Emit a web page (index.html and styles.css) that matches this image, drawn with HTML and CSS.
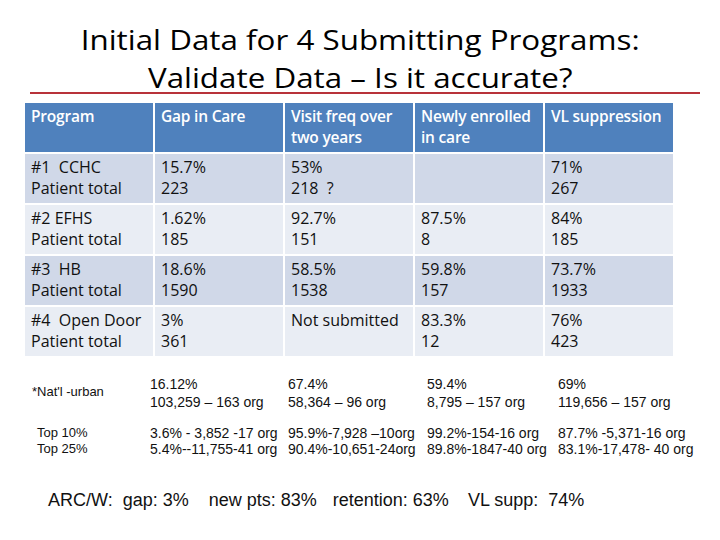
FILE: index.html
```html
<!DOCTYPE html>
<html>
<head>
<meta charset="utf-8">
<link rel="stylesheet" href="styles.css">
</head>
<body>
<div class="slide">
  <h1 class="title"><span class="tl">Initial Data for 4 Submitting Programs:</span><span class="tl">Validate Data – Is it accurate?</span></h1>
  <div class="rule"></div>
  <div class="grid">
    <div class="c h">Program</div>
    <div class="c h">Gap in Care</div>
    <div class="c h">Visit freq over two years</div>
    <div class="c h">Newly enrolled in care</div>
    <div class="c h">VL suppression</div>

    <div class="c o">#1&nbsp; CCHC<br>Patient total</div>
    <div class="c o">15.7%<br>223</div>
    <div class="c o">53%<br>218&nbsp; ?</div>
    <div class="c o"></div>
    <div class="c o">71%<br>267</div>

    <div class="c e">#2 EFHS<br>Patient total</div>
    <div class="c e">1.62%<br>185</div>
    <div class="c e">92.7%<br>151</div>
    <div class="c e">87.5%<br>8</div>
    <div class="c e">84%<br>185</div>

    <div class="c o">#3&nbsp; HB<br>Patient total</div>
    <div class="c o">18.6%<br>1590</div>
    <div class="c o">58.5%<br>1538</div>
    <div class="c o">59.8%<br>157</div>
    <div class="c o">73.7%<br>1933</div>

    <div class="c e">#4&nbsp; Open Door<br>Patient total</div>
    <div class="c e">3%<br>361</div>
    <div class="c e">Not submitted</div>
    <div class="c e">83.3%<br>12</div>
    <div class="c e">76%<br>423</div>
  </div>
  <div class="bench">
    <div class="b1">*Nat'l -urban</div>
    <div>16.12%<br>103,259 – 163 org</div>
    <div>67.4%<br>58,364 – 96 org</div>
    <div>59.4%<br>8,795 – 157 org</div>
    <div>69%<br>119,656 – 157 org</div>
  </div>
  <div class="bench top">
    <div class="b1 b1t">Top 10%<br>Top 25%</div>
    <div>3.6% - 3,852 -17 org<br>5.4%--11,755-41 org</div>
    <div>95.9%-7,928 –10org<br>90.4%-10,651-24org</div>
    <div>99.2%-154-16 org<br>89.8%-1847-40 org</div>
    <div>87.7% -5,371-16 org<br>83.1%-17,478- 40 org</div>
  </div>
  <div class="arc">
    <span class="a1">ARC/W:&nbsp; gap: 3%</span>
    <span class="a2">new pts: 83%</span>
    <span class="a3">retention: 63%</span>
    <span class="a4">VL supp:&nbsp; 74%</span>
  </div>
</div>
</body>
</html>
```
FILE: styles.css
```css
html, body {
  margin: 0;
  padding: 0;
  background: #ffffff;
}
.slide {
  width: 720px;
  height: 540px;
  overflow: hidden;
  font-family: "Open Sans", "Liberation Sans", sans-serif;
}
.title {
  margin: 0;
  padding-top: 21px;
  height: 71px;
  display: flex;
  flex-direction: column;
  align-items: center;
  font-family: "Open Sans", sans-serif;
  font-weight: 400;
  font-size: 27.5px;
  line-height: 38px;
  color: #000;
}
.tl {
  display: block;
  white-space: nowrap;
  transform: scaleX(1.14);
}
.rule {
  margin: 0 20px 0 30px;
  height: 2px;
  background: #b8323a;
}
.grid {
  margin: 9px 0 0 25px;
  width: 648px;
  display: grid;
  grid-template-columns: 128px 128px 128px 128px 128px;
  grid-template-rows: 49px 49px 49px 49px 49px;
  gap: 2px;
  background: #ffffff;
}
.c {
  padding: 3px 0 0 6px;
  font-size: 16px;
  line-height: 21px;
  color: #111;
}
.h {
  background: #4f81bd;
  color: #fff;
  font-weight: 600;
  font-size: 15.5px;
  letter-spacing: -0.2px;
}
.o { background: #d0d8e8; }
.e { background: #e9edf4; }
.bench {
  display: grid;
  grid-template-columns: 150px 138px 139px 131px 160px;
  font-family: "Liberation Sans", Arial, sans-serif;
  font-size: 14px;
  line-height: 18px;
  color: #111;
  margin-top: 19px;
  white-space: nowrap;
}
.bench.top { margin-top: 14px; line-height: 16px; }
.b1 { padding-left: 32px; padding-top: 8px; font-size: 13px; }
.b1t { padding-left: 37px; padding-top: 0; }
.arc {
  margin-top: 33px;
  padding-left: 48px;
  font-family: "Liberation Sans", Arial, sans-serif;
  font-size: 18px;
  line-height: 21px;
  color: #111;
  display: flex;
  white-space: nowrap;
}
.a2 { margin-left: 20px; }
.a3 { margin-left: 16px; }
.a4 { margin-left: 19px; }
```
